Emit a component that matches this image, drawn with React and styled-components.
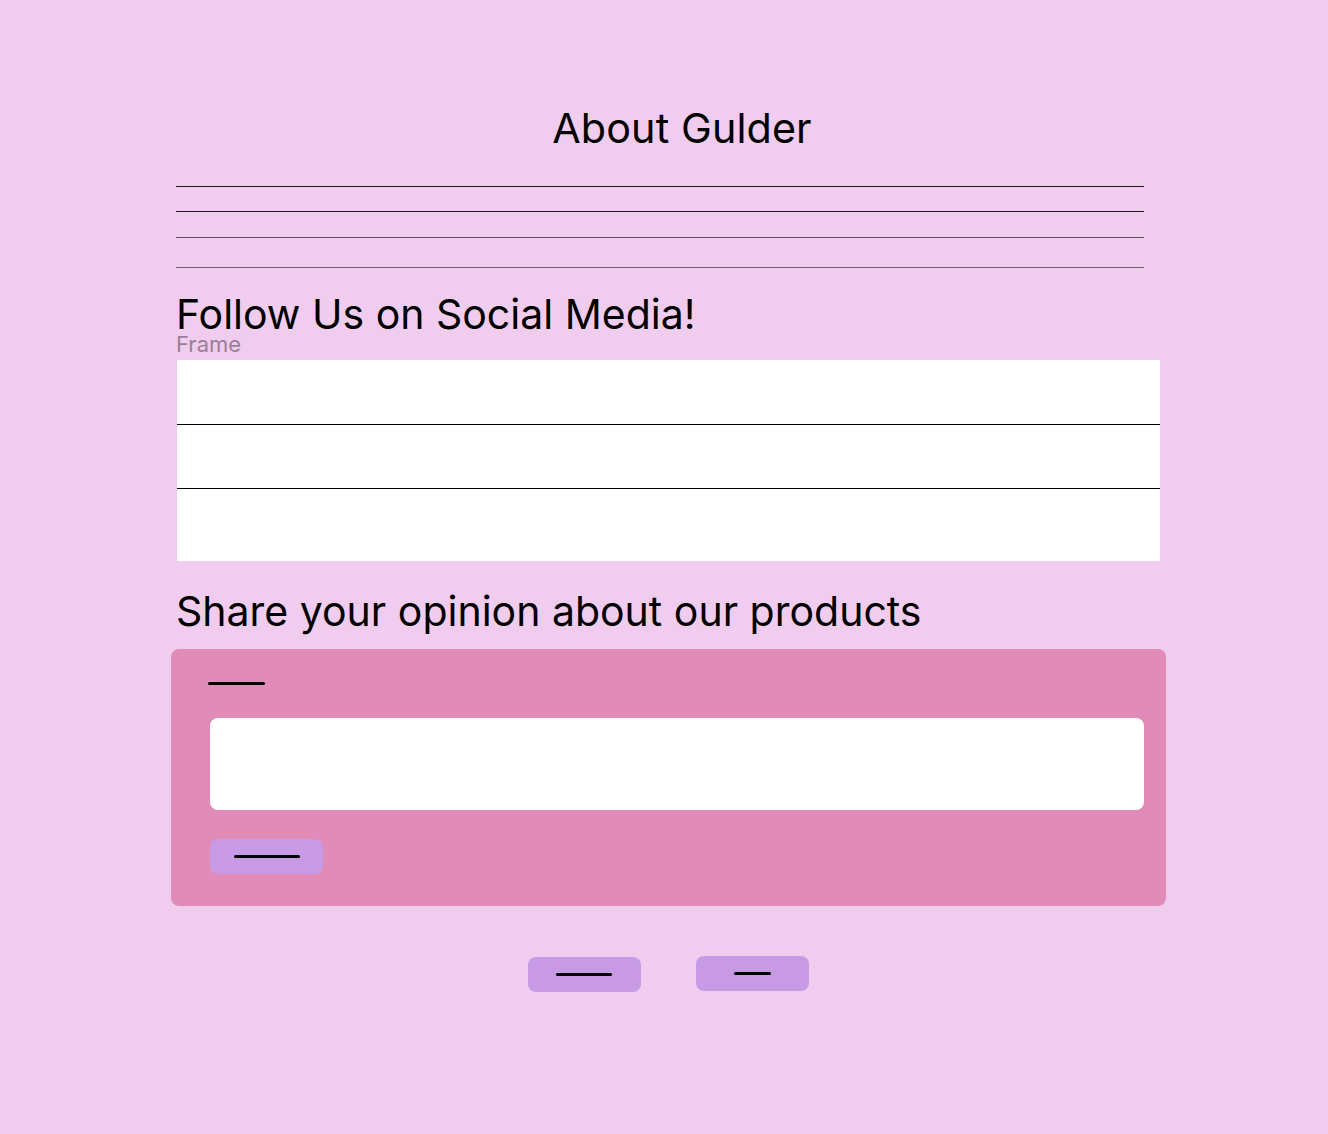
import React from "react";
import styled, { createGlobalStyle } from "styled-components";

const Global = createGlobalStyle`
  html, body { margin: 0; padding: 0; background: #f0cdee; }
  body { font-family: Inter, "Noto Sans", sans-serif; color: #000; }
`;

const Page = styled.div`
  width: 1328px;
  min-height: 1134px;
  background: #f0cdee;
  box-sizing: border-box;
  padding: 102px 0 0 176px;
  display: flex;
  flex-direction: column;
`;

const Title = styled.h1`
  margin: 0;
  width: 1012px;
  text-align: center;
  font-weight: 400;
  font-size: 41.3px;
  line-height: 52px;
  letter-spacing: 0.1px;
`;

const Rules = styled.div`
  margin-top: 32px;
  width: 968px;
  display: flex;
  flex-direction: column;
`;

const Rule = styled.div`
  height: 1px;
  background: ${(p) => p.$color};
  margin-top: ${(p) => p.$gap}px;
`;

const Heading = styled.h2`
  margin: 0;
  margin-top: ${(p) => p.$top}px;
  font-weight: 400;
  font-size: 41px;
  line-height: 40px;
  letter-spacing: 0;
`;

const FrameLabel = styled.div`
  font-size: 22px;
  line-height: 22px;
  color: #9a7f9a;
  margin-top: -1px;
`;

const Table = styled.div`
  margin-top: 5px;
  margin-left: 1px;
  width: 983px;
  background: #fff;
  display: flex;
  flex-direction: column;
`;

const Row = styled.div`
  box-sizing: border-box;
  height: ${(p) => p.$h}px;
  border-top: ${(p) => (p.$first ? "none" : "1px solid #000")};
`;

const Card = styled.div`
  margin-top: 18px;
  margin-left: -5px;
  width: 995px;
  height: 257px;
  background: #e18bb9;
  border-radius: 8px;
  box-sizing: border-box;
  padding: 33px 22px 0 37px;
  display: flex;
  flex-direction: column;
`;

const Dash = styled.span`
  display: block;
  width: ${(p) => p.$w}px;
  height: 3px;
  border-radius: 2px;
  background: #000;
`;

const Input = styled.div`
  margin-top: 33px;
  margin-left: 2px;
  height: 92px;
  background: #fff;
  border-radius: 8px;
`;

const Button = styled.button`
  width: 113px;
  height: 35px;
  border: none;
  border-radius: 8px;
  background: #c89ae6;
  padding: 0;
  display: flex;
  align-items: center;
  justify-content: center;
  cursor: pointer;
  margin-top: ${(p) => p.$top || 0}px;
`;

const SubmitWrap = styled.div`
  margin-top: 29px;
  margin-left: 2px;
`;

const Footer = styled.div`
  margin-top: 50px;
  width: 984px;
  display: flex;
  justify-content: center;
  align-items: flex-start;
  gap: 55px;
`;

export default function App() {
  return (
    <>
      <Global />
      <Page>
        <Title>About Gulder</Title>
        <Rules>
          <Rule $color="#1a1a1a" $gap={0} />
          <Rule $color="#1a1a1a" $gap={24} />
          <Rule $color="#5e4f5e" $gap={25} />
          <Rule $color="#6e5e6e" $gap={29} />
        </Rules>
        <Heading $top={26}>Follow Us on Social Media!</Heading>
        <FrameLabel>Frame</FrameLabel>
        <Table>
          <Row $first $h={64} />
          <Row $h={64} />
          <Row $h={73} />
        </Table>
        <Heading $top={30}>Share your opinion about our products</Heading>
        <Card>
          <Dash $w={57} />
          <Input />
          <SubmitWrap>
            <Button>
              <Dash $w={66} />
            </Button>
          </SubmitWrap>
        </Card>
        <Footer>
          <Button $top={1}>
            <Dash $w={56} />
          </Button>
          <Button>
            <Dash $w={37} />
          </Button>
        </Footer>
      </Page>
    </>
  );
}
